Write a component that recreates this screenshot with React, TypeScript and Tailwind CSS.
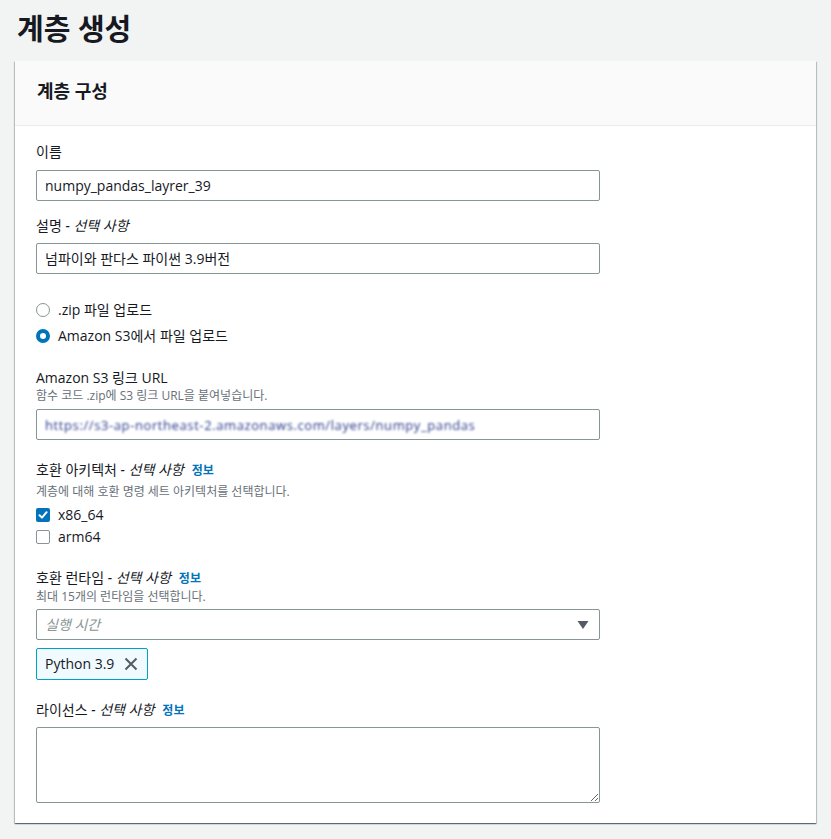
import React from "react";

function Info() {
  return <span className="ml-2 text-[12px] font-bold text-[#0073bb]">정보</span>;
}

function Optional() {
  return <span className="italic"> - 선택 사항</span>;
}

export default function App() {
  return (
    <div className="min-h-[839px] w-full bg-[#f2f3f3] text-[#16191f] font-['Open_Sans','Noto_Sans_CJK_KR',sans-serif]">
      <div className="h-[61px] pl-[17px] flex items-center">
        <h1 className="text-[29px] leading-[36px] font-bold -mt-[4px]">계층 생성</h1>
      </div>
      <div className="mx-[15px] bg-white shadow-[0_1px_1px_0_rgba(0,28,36,0.45),1px_1px_1px_0_rgba(0,28,36,0.18),-1px_1px_1px_0_rgba(0,28,36,0.18)]">
        <div className="h-[65px] bg-[#fafafa] border-b border-[#eaeded] flex items-center pl-[22px]">
          <h2 className="text-[18px] font-bold leading-[24px] -mt-[4px]">계층 구성</h2>
        </div>
        <div className="px-[21px] pt-[16px] pb-[20px] text-[14px]">
          {/* Name */}
          <div className="leading-[20px]">이름</div>
          <div className="mt-[8px] w-[564px] h-[31px] border border-[#879596] rounded-[2px] flex items-center px-[8px] leading-[20px]">
            numpy_pandas_layrer_39
          </div>

          {/* Description */}
          <div className="mt-[15px] leading-[20px]">
            설명<Optional />
          </div>
          <div className="mt-[7px] w-[564px] h-[31px] border border-[#879596] rounded-[2px] flex items-center px-[8px] leading-[20px]">
            넘파이와 판다스 파이썬 3.9버전
          </div>

          {/* Radios */}
          <div className="mt-[26px] flex items-center h-[20px]">
            <span className="w-[14px] h-[14px] rounded-full border border-[#879596] bg-white" />
            <span className="ml-[8px] leading-[20px]">.zip 파일 업로드</span>
          </div>
          <div className="mt-[6px] flex items-center h-[20px]">
            <span className="w-[14px] h-[14px] rounded-full border-[4px] border-[#0073bb] bg-white" />
            <span className="ml-[8px] leading-[20px]">Amazon S3에서 파일 업로드</span>
          </div>

          {/* S3 URL */}
          <div className="mt-[22px] leading-[20px]">Amazon S3 링크 URL</div>
          <div className="text-[12px] leading-[16px] text-[#687078]">함수 코드 .zip에 S3 링크 URL을 붙여넣습니다.</div>
          <div className="mt-[5px] w-[564px] h-[31px] border border-[#879596] rounded-[2px] flex items-center px-[8px] overflow-hidden">
            <span className="whitespace-nowrap text-[13px] leading-[20px] text-[#2a3a8c] blur-[1px] tracking-[0.6px]">
              https://s3-ap-northeast-2.amazonaws.com/layers/numpy_pandas
            </span>
          </div>

          {/* Architecture */}
          <div className="mt-[20px] leading-[20px]">
            호환 아키텍처<Optional />
            <Info />
          </div>
          <div className="mt-[3px] text-[12px] leading-[16px] text-[#687078]">계층에 대해 호환 명령 세트 아키텍처를 선택합니다.</div>
          <div className="mt-[5px] flex items-center h-[20px]">
            <span className="w-[14px] h-[14px] rounded-[2px] bg-[#0073bb] flex items-center justify-center">
              <svg width="10" height="10" viewBox="0 0 10 10" fill="none">
                <path d="M1.5 5.2 L4 7.6 L8.6 2.2" stroke="white" strokeWidth="2" strokeLinecap="round" strokeLinejoin="round" />
              </svg>
            </span>
            <span className="ml-[8px] leading-[20px]">x86_64</span>
          </div>
          <div className="mt-[2px] flex items-center h-[20px]">
            <span className="w-[14px] h-[14px] rounded-[2px] border border-[#879596] bg-white" />
            <span className="ml-[8px] leading-[20px]">arm64</span>
          </div>

          {/* Runtime */}
          <div className="mt-[21px] leading-[20px]">
            호환 런타임<Optional />
            <Info />
          </div>
          <div className="text-[12px] leading-[16px] text-[#687078]">최대 15개의 런타임을 선택합니다.</div>
          <div className="mt-[4px] w-[564px] h-[31px] border border-[#879596] rounded-[2px] flex items-center justify-between pl-[8px] pr-[10px]">
            <span className="italic text-[#879596] leading-[20px]">실행 시간</span>
            <svg width="12" height="10" viewBox="0 0 12 10">
              <path d="M0.5 1 L11.5 1 L6 9 Z" fill="#545b64" />
            </svg>
          </div>
          <div className="mt-[8px] inline-flex items-center h-[32px] border border-[#00a1c9] bg-[#f1faff] rounded-[2px] pl-[8px] pr-[9px]">
            <span className="leading-[20px]">Python 3.9</span>
            <svg className="ml-[10px]" width="14" height="14" viewBox="0 0 14 14">
              <path d="M1.5 1.5 L12.5 12.5 M12.5 1.5 L1.5 12.5" stroke="#545b64" strokeWidth="2" />
            </svg>
          </div>

          {/* License */}
          <div className="mt-[20px] leading-[20px]">
            라이선스<Optional />
            <Info />
          </div>
          <textarea
            className="block mt-[6px] w-[564px] h-[76px] border border-[#879596] rounded-[2px] outline-none"
            defaultValue=""
          />
        </div>
      </div>
    </div>
  );
}
